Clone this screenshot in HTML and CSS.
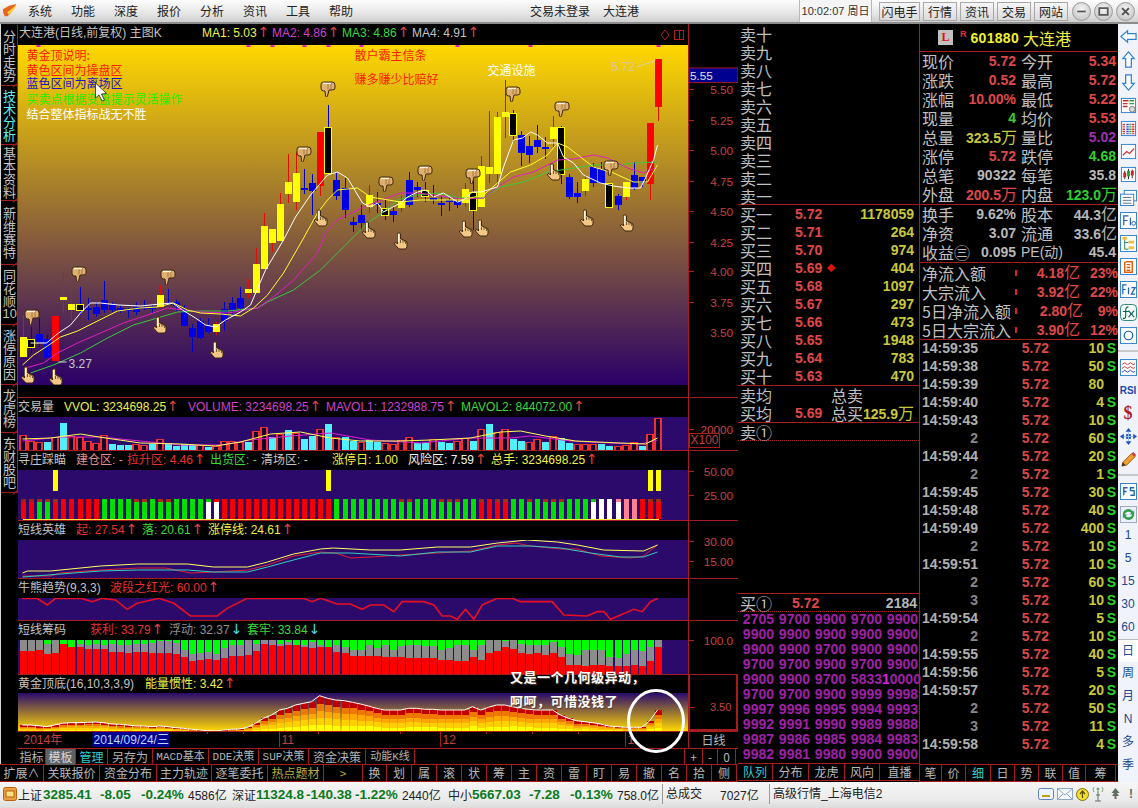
FILE: index.html
```html
<!DOCTYPE html>
<html lang="zh-CN">
<head>
<meta charset="utf-8">
<title>大连港 601880</title>
<link rel="stylesheet" href="styles.css">
</head>
<body>
<div class="app">
  <header class="topbar">
    <svg class="logo" viewBox="0 0 18 16"><path d="M1 6 L8 2 L16 0 Q13 8 6 14 L3 14 Q1 11 1 6Z" fill="#e8641c"/><path d="M6 9 Q10 7 16 1 Q14 8 7 12Z" fill="#ffd23c"/></svg>
    <nav class="menu"><span>系统</span><span>功能</span><span>深度</span><span>报价</span><span>分析</span><span>资讯</span><span>工具</span><span>帮助</span></nav>
    <div class="title"><span>交易未登录</span><span>大连港</span></div>
    <div class="clock">10:02:07 周日</div>
    <div class="btns"><span class="b-l">闪电手</span><span>行情</span><span>资讯</span><span>交易</span><span>网站</span></div>
    <div class="winbtns">
      <span><svg viewBox="0 0 20 20"><path d="M5 10h10" stroke="#555" stroke-width="2"/></svg></span>
      <span><svg viewBox="0 0 20 20"><rect x="5" y="6" width="10" height="8" fill="none" stroke="#555" stroke-width="2"/></svg></span>
      <span><svg viewBox="0 0 20 20"><path d="M6 6l8 8M14 6l-8 8" stroke="#555" stroke-width="2.4"/></svg></span>
    </div>
  </header>

  <div class="workspace">
    <div class="left">
      <div class="upper">
        <aside class="sidetabs">
          <div class="tab t1">分时走势</div>
          <div class="tab t2 on">技术分析</div>
          <div class="tab t3">基本资料</div>
          <div class="tab t4">新维赛特</div>
          <div class="tab t5">同花顺<span class="tcy">10</span></div>
          <div class="tab t6">涨停原因</div>
          <div class="tab t7">龙虎榜</div>
          <div class="tab t8">东财股吧</div>
        </aside>
        <section class="chart">
          <div class="pane p-main">
            <div class="pane-l">
              <div class="head h-main"><span class="wh">大连港(日线,前复权) 主图K</span><span class="ye">MA1: 5.03<i class="up">↑</i></span><span class="ma">MA2: 4.86<i class="up">↑</i></span><span class="gr">MA3: 4.86<i class="up">↑</i></span><span class="wh">MA4: 4.91<i class="up">↑</i></span><span class="glyphs"><svg viewBox="0 0 24 12" class="gl"><path d="M5 1l4 5-4 5-4-5z" fill="none" stroke="#b02020"/><rect x="14.500" y="1.500" width="9" height="9" fill="none" stroke="#b02020"/><path d="M19.500 2v8" stroke="#b02020"/></svg></span></div>
              <svg class="plot pm" id="mainplot" viewBox="18 45 669 340"></svg>
              <div class="gap12"></div>
            </div>
            <svg class="axis" id="ax0" viewBox="688 24 50 373"></svg>
          </div>
          <div class="pane p-vol">
            <div class="pane-l">
              <div class="head h-vol"><span class="wh">交易量</span><span class="ye">VVOL: 3234698.25<i class="up">↑</i></span><span class="ma">VOLUME: 3234698.25<i class="up">↑</i></span><span class="ma">MAVOL1: 1232988.75<i class="up">↑</i></span><span class="gr">MAVOL2: 844072.00<i class="up">↑</i></span></div>
              <svg class="plot" id="volplot" viewBox="18 417 669 33"></svg>
            </div>
            <div class="axwrap"><svg class="axis" id="ax1" viewBox="688 398 50 52"></svg><span class="x100">X100</span></div>
          </div>
          <div class="pane p-a">
            <div class="pane-l">
              <div class="head h-a"><span class="wh">寻庄踩瞄</span><span class="pk">建仓区: -</span><span class="re">拉升区: 4.46<i class="up">↑</i></span><span class="gr">出货区: -</span><span class="wh">清场区: -</span><span class="ye">涨停日: 1.00</span><span class="wt">风险区: 7.59<i class="up">↑</i></span><span class="ye">总手: 3234698.25<i class="up">↑</i></span></div>
              <svg class="plot" id="zhuangplot" viewBox="18 470 669 50"></svg>
            </div>
            <svg class="axis" id="ax2" viewBox="688 451 50 69"></svg>
          </div>
          <div class="pane p-b">
            <div class="pane-l">
              <div class="head h-b"><span class="wh">短线英雄</span><span class="re">起: 27.54<i class="up">↑</i></span><span class="gr">落: 20.61<i class="up">↑</i></span><span class="ye">涨停线: 24.61<i class="up">↑</i></span></div>
              <svg class="plot" id="heroplot" viewBox="18 540 669 38"></svg>
            </div>
            <svg class="axis" id="ax3" viewBox="688 521 50 57"></svg>
          </div>
          <div class="pane p-c">
            <div class="pane-l">
              <div class="head h-c"><span class="wh">牛熊趋势(9,3,3)</span><span class="re">波段之红光: 60.00<i class="up">↑</i></span></div>
              <svg class="plot" id="bullplot" viewBox="18 598 669 22"></svg>
            </div>
            <div class="axis-empty"></div>
          </div>
          <div class="pane p-d">
            <div class="pane-l">
              <div class="head h-d"><span class="wh">短线筹码</span><span class="re">获利: 33.79<i class="up">↑</i></span><span class="gy">浮动: 32.37<i class="dn">↓</i></span><span class="gr">套牢: 33.84<i class="dn">↓</i></span></div>
              <svg class="plot" id="chipplot" viewBox="18 640 669 34"></svg>
            </div>
            <svg class="axis" id="ax5" viewBox="688 621 50 53"></svg>
          </div>
          <div class="pane p-e">
            <div class="pane-l">
              <div class="head h-e"><span class="wh">黄金顶底(16,10,3,3,9)</span><span class="ye">能量惯性: 3.42<i class="up">↑</i></span></div>
              <svg class="plot gold" id="goldplot" viewBox="18 693 669 38"></svg>
            </div>
            <svg class="axis axis-box" id="ax6" viewBox="688 675 50 56"></svg>
          </div>
          <div class="daterow">
            <svg class="dates" id="dates" viewBox="18 732 669 15"></svg>
            <div class="period">日线</div>
          </div>
          <div class="tabrow">
            <span>指标</span><span class="act">模板</span><span class="cy">管理</span><span>另存为</span><span class="lat">MACD基本</span><span class="lat">DDE决策</span><span class="lat">SUP决策</span><span>资金决策</span><span class="lat">动能K线</span><span></span><span>+</span><span>-</span><span>0</span>
          </div>
          <div class="note n1">又是一个几何级异动，</div>
          <div class="note n2">呵呵，可惜没钱了</div>
          <svg class="ring" viewBox="0 0 60 66"><ellipse cx="30" cy="33" rx="27.500" ry="30.500" fill="none" stroke="#fff" stroke-width="3"/></svg>
        </section>
      </div>
      <div class="bottomtabs">
        <span>扩展∧</span><span>关联报价</span><span>资金分布</span><span>主力轨迹</span><span>逐笔委托</span><span class="ol">热点题材</span><span class="ol">&gt;</span><span>换</span><span>划</span><span>属</span><span>滚</span><span>状</span><span>筹</span><span>主</span><span>资</span><span>雷</span><span>盯</span><span>易</span><span>撤</span><span>名</span><span>拾</span><span>侧</span>
      </div>
    </div>

    <section class="book">
      <div class="sells">
        <div class="bk">卖十</div><div class="bk">卖九</div><div class="bk">卖八</div><div class="bk">卖七</div><div class="bk">卖六</div><div class="bk">卖五</div><div class="bk">卖四</div><div class="bk">卖三</div><div class="bk">卖二</div><div class="bk">卖一</div>
      </div>
      <div class="bids">
        <div class="bk"><span>买一</span><b class="cr">5.72</b><b class="cy2">1178059</b></div>
        <div class="bk"><span>买二</span><b class="cr">5.71</b><b class="cy2">264</b></div>
        <div class="bk"><span>买三</span><b class="cr">5.70</b><b class="cy2">974</b></div>
        <div class="bk"><span>买四</span><b class="cr">5.69<em>◆</em></b><b class="cy2">404</b></div>
        <div class="bk"><span>买五</span><b class="cr">5.68</b><b class="cy2">1097</b></div>
        <div class="bk"><span>买六</span><b class="cr">5.67</b><b class="cy2">297</b></div>
        <div class="bk"><span>买七</span><b class="cr">5.66</b><b class="cy2">473</b></div>
        <div class="bk"><span>买八</span><b class="cr">5.65</b><b class="cy2">1948</b></div>
        <div class="bk"><span>买九</span><b class="cr">5.64</b><b class="cy2">783</b></div>
        <div class="bk"><span>买十</span><b class="cr">5.63</b><b class="cy2">470</b></div>
      </div>
      <div class="avgs">
        <div class="bk avg"><span>卖均</span><b></b><span>总卖</span><b></b></div>
        <div class="bk avg"><span>买均</span><b class="cr">5.69</b><span>总买</span><b class="cy2">125.9<u>万</u></b></div>
      </div>
      <div class="queue-a"><div class="bk dot">卖①</div></div>
      <div class="queue-b">
        <div class="bk dot q"><span>买①</span><b class="cr">5.72</b><b class="gy2">2184</b></div>
        <div class="qgrid">
          <b>2705</b><b>9700</b><b>9900</b><b>9700</b><b>9900</b>
          <b>9900</b><b>9900</b><b>9900</b><b>9900</b><b>9900</b>
          <b>9900</b><b>9900</b><b>9700</b><b>9900</b><b>9900</b>
          <b>9700</b><b>9700</b><b>9900</b><b>9700</b><b>9900</b>
          <b>9900</b><b>9900</b><b>9700</b><b>5833</b><b class="wide"><span class="hl">1</span>0000</b>
          <b>9700</b><b>9700</b><b>9900</b><b>9999</b><b>9998</b>
          <b>9997</b><b>9996</b><b>9995</b><b>9994</b><b>9993</b>
          <b>9992</b><b>9991</b><b>9990</b><b>9989</b><b>9988</b>
          <b>9987</b><b>9986</b><b>9985</b><b>9984</b><b>9983</b>
          <b>9982</b><b>9981</b><b>9980</b><b>9900</b><b>9900</b>
        </div>
      </div>
      <div class="booktabs"><span class="cy">队列</span><span>分布</span><span>龙虎</span><span>风向</span><span>直播</span></div>
    </section>

    <section class="quote">
      <div class="qhead">
        <span class="lbadge">L</span><sup>R</sup><b>601880</b><span class="qname">大连港</span>
      </div>
      <div class="qblock">
        <div class="qrow"><span>现价</span><b class="cr">5.72</b><span>今开</span><b class="cr">5.34</b></div>
        <div class="qrow"><span>涨跌</span><b class="cr">0.52</b><span>最高</span><b class="cr">5.72</b></div>
        <div class="qrow"><span>涨幅</span><b class="cr">10.00%</b><span>最低</span><b class="cr">5.22</b></div>
        <div class="qrow"><span>现量</span><b class="cg">4</b><span>均价</span><b class="cr">5.53</b></div>
        <div class="qrow"><span>总量</span><b class="cy2">323.5<u>万</u></b><span>量比</span><b class="cp">5.02</b></div>
        <div class="qrow"><span>涨停</span><b class="cr">5.72</b><span>跌停</span><b class="cg">4.68</b></div>
        <div class="qrow"><span>总笔</span><b class="gy2">90322</b><span>每笔</span><b class="gy2">35.8</b></div>
        <div class="qrow"><span>外盘</span><b class="cr">200.5<u>万</u></b><span>内盘</span><b class="cg">123.0<u>万</u></b></div>
      </div>
      <div class="qblock b2">
        <div class="qrow"><span>换手</span><b class="gy2">9.62%</b><span>股本</span><b class="gy2">44.3<u>亿</u></b></div>
        <div class="qrow"><span>净资</span><b class="gy2">3.07</b><span>流通</span><b class="gy2">33.6<u>亿</u></b></div>
        <div class="qrow"><span>收益㊂</span><b class="gy2">0.095</b><span class="pelabel">PE(动)</span><b class="gy2">45.4</b></div>
      </div>
      <div class="qblock b3">
        <div class="frow"><span>净流入额</span><i></i><b class="cr">4.18<u>亿</u></b><b class="cr">23%</b></div>
        <div class="frow"><span>大宗流入</span><i></i><b class="cr">3.92<u>亿</u></b><b class="cr">22%</b></div>
        <div class="frow"><span>5日净流入额</span><i></i><b class="cr s">2.80<u>亿</u></b><b class="cr">9%</b></div>
        <div class="frow"><span>5日大宗流入</span><i></i><b class="cr">3.90<u>亿</u></b><b class="cr">12%</b></div>
      </div>
      <div class="trades">
        <div class="tr"><b class="t">14:59:35</b><b class="p">5.72</b><b class="v">10</b><b class="s">S</b></div>
        <div class="tr"><b class="t">14:59:38</b><b class="p">5.72</b><b class="v">50</b><b class="s">S</b></div>
        <div class="tr"><b class="t">14:59:39</b><b class="p">5.72</b><b class="v">80</b><b class="s"></b></div>
        <div class="tr"><b class="t">14:59:40</b><b class="p">5.72</b><b class="v">4</b><b class="s">S</b></div>
        <div class="tr"><b class="t">14:59:43</b><b class="p">5.72</b><b class="v">10</b><b class="s">S</b></div>
        <div class="tr"><b class="t r">2</b><b class="p">5.72</b><b class="v">60</b><b class="s">S</b></div>
        <div class="tr"><b class="t">14:59:44</b><b class="p">5.72</b><b class="v">20</b><b class="s">S</b></div>
        <div class="tr"><b class="t r">2</b><b class="p">5.72</b><b class="v">1</b><b class="s">S</b></div>
        <div class="tr"><b class="t">14:59:45</b><b class="p">5.72</b><b class="v">30</b><b class="s">S</b></div>
        <div class="tr"><b class="t">14:59:48</b><b class="p">5.72</b><b class="v">40</b><b class="s">S</b></div>
        <div class="tr"><b class="t">14:59:49</b><b class="p">5.72</b><b class="v">400</b><b class="s">S</b></div>
        <div class="tr"><b class="t r">2</b><b class="p">5.72</b><b class="v">10</b><b class="s">S</b></div>
        <div class="tr"><b class="t">14:59:51</b><b class="p">5.72</b><b class="v">10</b><b class="s">S</b></div>
        <div class="tr"><b class="t r">2</b><b class="p">5.72</b><b class="v">60</b><b class="s">S</b></div>
        <div class="tr"><b class="t r">3</b><b class="p">5.72</b><b class="v">10</b><b class="s">S</b></div>
        <div class="tr"><b class="t">14:59:54</b><b class="p">5.72</b><b class="v">5</b><b class="s">S</b></div>
        <div class="tr"><b class="t r">2</b><b class="p">5.72</b><b class="v">10</b><b class="s">S</b></div>
        <div class="tr"><b class="t">14:59:55</b><b class="p">5.72</b><b class="v">40</b><b class="s">S</b></div>
        <div class="tr"><b class="t">14:59:56</b><b class="p">5.72</b><b class="v">5</b><b class="s">S</b></div>
        <div class="tr"><b class="t">14:59:57</b><b class="p">5.72</b><b class="v">20</b><b class="s">S</b></div>
        <div class="tr"><b class="t r">2</b><b class="p">5.72</b><b class="v">50</b><b class="s">S</b></div>
        <div class="tr"><b class="t r">3</b><b class="p">5.72</b><b class="v">11</b><b class="s">S</b></div>
        <div class="tr"><b class="t">14:59:58</b><b class="p">5.72</b><b class="v">4</b><b class="s">S</b></div>
      </div>
      <div class="quotetabs"><span>笔</span><span>价</span><span class="cy">细</span><span>日</span><span>势</span><span>联</span><span>值</span><span>筹</span></div>
    </section>

    <aside class="rail">
      <div class="ico"><svg viewBox="0 0 18 18"><path d="M1 9l7-6v3h9v6H8v3z" fill="#fff" stroke="#2f80d0" stroke-width="1.300"/></svg></div>
      <div class="ico"><svg viewBox="0 0 18 18"><path d="M9 1l6 7h-3v9H6V8H3z" fill="#fff" stroke="#2f80d0" stroke-width="1.300"/></svg></div>
      <div class="ico"><svg viewBox="0 0 18 18"><path d="M9 17l6-7h-3V1H6v9H3z" fill="#fff" stroke="#2f80d0" stroke-width="1.300"/></svg></div>
      <div class="ico"><svg viewBox="0 0 18 18"><rect x="1.500" y="1.500" width="15" height="15" fill="#fff" stroke="#2f80d0"/><path d="M3 4h6M3 7h5M3 10h5" stroke="#c03030" stroke-width="1.500"/><path d="M10 4h5M10 7h5" stroke="#30a040" stroke-width="1.500"/><circle cx="13" cy="13" r="3" fill="#ddd" stroke="#777"/></svg></div>
      <div class="ico"><svg viewBox="0 0 18 18"><rect x="1.500" y="1.500" width="15" height="15" fill="#fff" stroke="#2f80d0"/><path d="M4 4v11" stroke="#c03030" stroke-width="2.500" stroke-dasharray="1.500 1"/><path d="M8 4v11" stroke="#3040c0" stroke-width="2.500" stroke-dasharray="1.500 1"/><path d="M11 4v11" stroke="#30a040" stroke-width="2.500" stroke-dasharray="1.500 1"/><path d="M14 4v11" stroke="#d03030" stroke-width="2.500" stroke-dasharray="1.500 1"/></svg></div>
      <div class="ico"><svg viewBox="0 0 18 18"><rect x="1.500" y="1.500" width="15" height="15" fill="#fff" stroke="#2f80d0"/><path d="M3 13l4-4 3 2 5-5" fill="none" stroke="#d03030" stroke-width="1.300"/></svg></div>
      <div class="ico"><svg viewBox="0 0 18 18"><rect x="1.500" y="1.500" width="15" height="15" fill="#fff" stroke="#2f80d0"/><path d="M5 5v9" stroke="#222"/><rect x="3.500" y="7" width="3" height="5" fill="#d02020"/><path d="M9 3v11" stroke="#222"/><rect x="7.500" y="5" width="3" height="6" fill="#20a040"/><path d="M13 4v9" stroke="#222"/><rect x="11.500" y="5" width="3" height="5" fill="#d02020"/></svg></div>
      <div class="ico"><svg viewBox="0 0 18 18"><rect x="4.500" y="1.500" width="13" height="11" fill="#fff" stroke="#2f80d0"/><rect x="0.500" y="5.500" width="14" height="12" fill="#fff" stroke="#2f80d0"/><path d="M3 9h9M3 12h9M3 15h9" stroke="#5a6a80"/></svg></div>
      <div class="ico"><svg viewBox="0 0 18 18"><rect x="0.500" y="0.500" width="17" height="17" fill="#fff" stroke="#2f80d0"/><path d="M4 14V4h5M4 9h4M11 6v8" fill="none" stroke="#2060b0" stroke-width="1.300"/><circle cx="14.500" cy="12" r="2" fill="none" stroke="#2060b0"/></svg></div>
      <div class="ico"><svg viewBox="0 0 18 18"><rect x="0.500" y="0.500" width="17" height="17" fill="#fff" stroke="#2f80d0"/><path d="M5 3v12h4M5 8h4" fill="none" stroke="#208060"/><rect x="2.500" y="2" width="5" height="3" fill="#f0c040"/><rect x="9" y="6" width="6" height="3" fill="#f0c040"/><rect x="9" y="12" width="6" height="3" fill="#f0c040"/></svg></div>
      <div class="ico"><svg viewBox="0 0 18 18"><rect x="0.500" y="0.500" width="17" height="17" fill="#fff" stroke="#2f80d0"/><path d="M6 4h7v11H5V4M7 7h4M7 10h4M7 13h4" fill="none" stroke="#e06010" stroke-width="1.500"/></svg></div>
      <div class="ico"><svg viewBox="0 0 18 18"><rect x="0.500" y="0.500" width="17" height="17" fill="#fff" stroke="#2f80d0"/><path d="M3 14V4h4M3 9h3M9 7v7M12 7h4l-4 7h4" fill="none" stroke="#2060b0" stroke-width="1.300"/></svg></div>
      <div class="ico"><svg viewBox="0 0 18 18"><rect x="0.500" y="0.500" width="17" height="17" rx="4" fill="#f4fff8" stroke="#208070"/><path d="M9 3Q6 3 6 7v6q0 3-3 2M3 8h6M9 7l6 7M15 7l-6 7" fill="none" stroke="#106060" stroke-width="1.200"/></svg></div>
      <div class="ico"><svg viewBox="0 0 18 18"><rect x="0.500" y="0.500" width="17" height="17" fill="#fff" stroke="#2f80d0"/><circle cx="9" cy="9" r="4.500" fill="none" stroke="#1860b0" stroke-width="1.300"/></svg></div>
      <hr class="rule">
      <div class="ico"><svg viewBox="0 0 18 18"><rect x="0.500" y="0.500" width="17" height="17" fill="#fff" stroke="#2f80d0"/><path d="M2 6l3-2 3 2 3-2 3 2 2-1" fill="none" stroke="#d03030"/><path d="M2 10l3-2 3 2 3-2 3 2 2-1" fill="none" stroke="#d03030"/><path d="M2 14l3-2 3 2 3-2 3 2 2-1" fill="none" stroke="#3040c0"/></svg></div>
      <div class="ico rsi">RSI</div>
      <div class="ico dollar">$</div>
      <div class="ico"><svg viewBox="0 0 18 18"><path d="M9 0l3 4H6zM9 18l-3-4h6zM0 9l4-3v6zM18 9l-4 3V6z" fill="#1850c0"/><rect x="6.500" y="6.500" width="5" height="5" fill="#1850c0"/><path d="M9 4v10M4 9h10" stroke="#9cc0f0"/></svg></div>
      <div class="ico"><svg viewBox="0 0 18 18"><path d="M3 12L12 3l4 3-9 9-5 1z" fill="#f0a030" stroke="#a06010"/><path d="M12 3l4 3 1-2-3-3z" fill="#d04040"/><path d="M2 16l1-4 3 3z" fill="#333"/></svg></div>
      <hr class="rule">
      <div class="ico"><svg viewBox="0 0 18 18"><rect x="0.500" y="0.500" width="17" height="17" fill="#fff" stroke="#2f80d0"/><path d="M8 5H4v8M4 9h3M15 5h-4v3h4v5h-4" fill="none" stroke="#1860b0" stroke-width="1.400"/></svg></div>
      <div class="ico"><svg viewBox="0 0 18 18"><rect x="0.500" y="0.500" width="17" height="17" fill="#eef" stroke="#9ab"/><path d="M3 9a6 6 0 0 1 11-3l1-2v5h-5l2-1.500A4 4 0 0 0 5 9zM15 9a6 6 0 0 1-11 3l-1 2V9h5L6 10.500A4 4 0 0 0 13 9z" fill="#30a050"/></svg></div>
      <div class="numbers">
        <span>1</span><span>5</span><span>15</span><span>30</span><span>60</span><span class="cur">日</span><span>周</span><span>月</span><span>N</span><span>多</span><span>季</span>
      </div>
    </aside>
  </div>

  <footer class="status">
    <svg class="sico" viewBox="0 0 14 14"><rect x="0.500" y="0.500" width="13" height="13" rx="2" fill="#e8a040" stroke="#b86010"/><rect x="3" y="4" width="8" height="6" fill="#ffe080" stroke="#b86010"/></svg>
    <span>上证</span><b class="sg">3285.41</b><b class="sg">-8.05</b><b class="sg">-0.24%</b><span>4586亿</span>
    <span>深证</span><b class="sg">11324.8</b><b class="sg">-140.38</b><b class="sg">-1.22%</b><span>2440亿</span>
    <span>中小</span><b class="sg">5667.03</b><b class="sg">-7.28</b><b class="sg">-0.13%</b><span>758.0亿</span>
    <span class="ln">总成交</span><span class="rt">7027亿</span><span class="ln">高级行情_上海电信2</span>
    <div class="sicons">
      <svg viewBox="0 0 16 12" width="16" height="12"><rect x="0.500" y="0.500" width="15" height="11" rx="2" fill="#eef4ff" stroke="#6080c0"/><path d="M4 8h8" stroke="#c0a020" stroke-width="2"/></svg>
      <svg viewBox="0 0 16 12" width="16" height="12"><rect x="0.500" y="0.500" width="15" height="11" fill="#f4f8ff" stroke="#90a8c8"/><path d="M1 1l7 6 7-6M1 11l5-5M15 11l-5-5" fill="none" stroke="#90a8c8"/></svg>
      <svg viewBox="0 0 13 13" width="13" height="13"><ellipse cx="6.500" cy="6.500" rx="6" ry="6" fill="#f0e030" stroke="#807010"/><path d="M6.500 3v7M4 6l2.500-3L9 6" fill="none" stroke="#605010" stroke-width="1.300"/></svg>
      <svg viewBox="0 0 12 16" width="12" height="16"><path d="M6 5v10M3 15h6M4 9h4" stroke="#607060" fill="none"/><circle cx="6" cy="3" r="1.500" fill="#80a080"/><path d="M2 1Q0 3 2 6M10 1q2 2 0 5" stroke="#80a080" fill="none"/></svg>
      <svg viewBox="0 0 9 12" width="9" height="12"><path d="M4.500 0l4 5H6l2 3H5.500v3h-2V8H1l2-3H.5z" fill="#607060"/></svg>
      <span class="bang">!</span>
    </div>
  </footer>
</div>
<script src="chart.js"></script>
</body>
</html>
```

FILE: styles.css
```css
* { box-sizing: border-box; }
html, body { margin: 0; padding: 0; }
body {
  width: 1138px; height: 808px; overflow: hidden;
  background: #eceff2;
  font: 12px "Liberation Sans", "Noto Sans CJK SC", sans-serif;
  color: #222;
}
.app { width: 1138px; height: 808px; display: flex; flex-direction: column; }

/* title bar */
.topbar {
  height: 24px; flex: none; display: flex; align-items: center;
  background: linear-gradient(#fdfdfd, #e6e6e6 60%, #cfcfcf);
  border-bottom: 2px solid #8c8c8c;
  font-family: "Noto Sans CJK SC", sans-serif;
}
.logo { width: 16px; height: 16px; margin: 0 10px 0 2px; flex: none; }
.menu { display: flex; width: 344px; flex: none; }
.menu span { width: 43px; line-height: 22px; }
.title { margin-left: 158px; width: 269px; flex: none; display: flex; gap: 13px; line-height: 22px; }
.clock {
  width: 73px; height: 22px; line-height: 22px; flex: none; text-align: center; white-space: nowrap;
  background: #f5f5f5; border-left: 1px solid #b8b8b8; border-right: 1px solid #b8b8b8;
  color: #333; font: 11px/22px "Liberation Sans", "Noto Sans CJK SC", sans-serif;
}
.btns { display: flex; gap: 3px; margin-left: 7px; flex: none; }
.btns span {
  width: 34px; height: 19px; line-height: 17px; text-align: center;
  border: 1px solid #a8a8a8; background: linear-gradient(#f6f6f6, #dadada);
}
.btns .b-l { width: 41px; }
.winbtns { display: flex; gap: 3px; margin-left: 4px; flex: none; }
.winbtns span {
  width: 19px; height: 19px; border-radius: 50%; border: 1px solid #9a9a9a;
  background: radial-gradient(circle at 50% 35%, #f4f4f4, #bdbdbd);
  display: block;
}
.winbtns svg { width: 17px; height: 17px; display: block; }

/* layout */
.workspace { height: 758px; flex: none; display: flex; background: #000; }
.left { width: 738px; flex: none; display: flex; flex-direction: column; }
.upper { height: 740px; flex: none; display: flex; }

/* vertical tabs */
.sidetabs { width: 18px; flex: none; background: #000; border-left: 1px solid #d8d8d8; padding-top: 1px; }
.tab {
  position: relative;
  writing-mode: vertical-rl; text-orientation: upright;
  font: 13px/16px "Noto Sans CJK SC", sans-serif;
  color: #c4c4c4; text-align: center;
  display: flex; align-items: center; justify-content: center;
  border-bottom: 1px solid #a81c1c; border-right: 1px solid #a81c1c;
  letter-spacing: -0.3px;
}
.tab::after {
  content: ""; position: absolute; right: -1px; bottom: -1px; width: 6px; height: 1px;
  background: #a81c1c; transform: rotate(-40deg);
}
.tab.on { color: #5cf0f0; }
.tcy { text-combine-upright: all; font-family: "Liberation Sans", sans-serif; }
.t1 { height: 61px; } .t2 { height: 59px; } .t3 { height: 56px; } .t4 { height: 64px; }
.t5 { height: 60px; } .t6 { height: 60px; } .t7 { height: 48px; } .t8 { height: 60px; }

/* chart panes */
.chart { width: 720px; flex: none; position: relative; display: flex; flex-direction: column; background: #000; }
.pane { display: flex; border-top: 1px solid #a81c1c; flex: none; }
.pane-l { width: 670px; flex: none; display: flex; flex-direction: column; min-height: 0; }
.p-main { height: 373px; border-top: none; }
.p-vol { height: 53px; }
.p-a { height: 70px; }
.p-b { height: 58px; }
.p-c { height: 42px; }
.p-d { height: 54px; }
.p-e { height: 57px; }
.head {
  flex: none; height: 19px; line-height: 19px; display: grid; white-space: nowrap;
  font-size: 12px; color: #c0c0c0;
}
.head span { overflow: visible; }
.head i { font: normal 14px/12px "DejaVu Sans", sans-serif; color: #e04040; margin-left: 1px; }
.head i.dn { color: #40e0f0; }
.h-main { height: 21px; line-height: 19px; grid-template-columns: 183px 70px 70px 70px 1fr 28px; padding-left: 1px; }
.h-vol { grid-template-columns: 46px 124px 138px 135px 1fr; }
.h-a { grid-template-columns: 58px 51px 83px 51px 71px 76px 83px 1fr; }
.h-b { height: 19px; grid-template-columns: 58px 66px 66px 1fr; }
.h-c { grid-template-columns: 92px 1fr; }
.h-d { grid-template-columns: 72px 79px 78px 1fr; }
.h-e { height: 18px; grid-template-columns: 127px 1fr; }
.glyphs { display: flex; align-items: center; }
.gl { width: 24px; height: 12px; }
.wh { color: #c4c4c4; } .wt { color: #f0f0f0; } .ye { color: #f0f04c; } .ma { color: #d040d0; }
.gr { color: #3cd83c; } .re { color: #e83030; } .pk { color: #e09090; } .gy { color: #909090; }
.plot { display: block; flex: 1 1 auto; width: 670px; min-height: 0; background: #2c0a6c; }
.pm { flex: none; height: 340px; background: linear-gradient(#ffd800, #2a0068); }
.gold { background: linear-gradient(#2a0a6c, #ffd800); }
.gap12 { height: 12px; flex: none; }
.axis, .axis-empty { width: 50px; flex: none; display: block; border-left: 1px solid #a81c1c; }
.axis-box { border: 2px solid #a81c1c; border-top: none; width: 50px; }
.axwrap { position: relative; width: 50px; flex: none; }
.axwrap .axis { width: 50px; height: 100%; }
.x100 {
  position: absolute; left: 1px; top: 35px; width: 31px; height: 15px; line-height: 13px;
  border: 1px solid #a81c1c; background: #000; color: #c04040; text-align: center;
}
.axis text { font: 12px "Liberation Sans", sans-serif; fill: #c84040; text-anchor: end; }
.axis .cur { fill: #e0e0e0; text-anchor: start; }
.daterow { height: 17px; flex: none; display: flex; border-top: 1px solid #a81c1c; }
.dates { width: 670px; height: 15px; display: block; }
.dates text { font: 12px "Liberation Sans", "Noto Sans CJK SC", sans-serif; fill: #c84040; }
.dates .sel { fill: #b8d8ff; }
.period { width: 50px; border-left: 1px solid #a81c1c; color: #b8b8b8; text-align: center; line-height: 15px; font-family: "Noto Sans CJK SC", sans-serif; }
.tabrow {
  height: 17px; flex: none; display: grid;
  grid-template-columns: 28px 30px 32px 45px 56px 50px 50px 57px 49px 270px 18px 15px 18px;
  border-top: 1px solid #a81c1c; color: #b4b4b4; font-family: "Noto Sans CJK SC", sans-serif;
}
.tabrow span { text-align: center; line-height: 16px; border-right: 1px solid #a81c1c; white-space: nowrap; }
.tabrow .act { background: #606060; color: #d8d8d8; }
.tabrow .lat { font-family: "Liberation Mono", "Noto Sans CJK SC", sans-serif; font-size: 11px; }
.cy { color: #30d0d0; }
.note {
  position: absolute; font: bold 13px/16px "Noto Sans CJK SC", sans-serif; color: #fff;
  text-shadow: 1px 1px 1px #5a4030; white-space: nowrap;
}
.n1 { left: 492px; top: 645px; letter-spacing: .5px; }
.n2 { left: 492px; top: 669px; letter-spacing: .5px; }
.ring { position: absolute; left: 608px; top: 664px; width: 60px; height: 66px; }

.bottomtabs {
  height: 18px; flex: none; display: grid;
  grid-template-columns: 44px 56px 57px 55px 56px 56px 39px 24px repeat(14, 25px);
  border-top: 1px solid #a81c1c; border-bottom: 1px solid #a81c1c;
  color: #b8b8b8; font-family: "Noto Sans CJK SC", sans-serif;
}
.bottomtabs span { text-align: center; line-height: 16px; border-right: 1px solid #a81c1c; }
.bottomtabs .ol { color: #b8a840; }

/* order book */
.book { width: 182px; flex: none; display: flex; flex-direction: column; border-right: 1px solid #a81c1c; padding-top: 1px; }
.bk {
  height: 18px; line-height: 18px; display: grid; grid-template-columns: 55px 46px 1fr;
  padding: 0 5px 0 2px; color: #c0c0c0; font-size: 16px; font-family: "Noto Sans CJK SC", sans-serif; white-space: nowrap;
}
.bk b, .qrow b, .frow b, .tr b, .qgrid b { font: bold 14px "Liberation Sans", sans-serif; }
.bk b { line-height: 18px; }
.bk b:last-child { text-align: right; }
.bk u { text-decoration: none; font: 16px/16px "Noto Sans CJK SC", sans-serif; }
.bk em { color: #e01010; font-size: 8px; font-style: normal; margin-left: 5px; vertical-align: 2px; }
.cr { color: #e04848; } .cy2 { color: #c8c83c; } .cg { color: #30d030; } .cp { color: #a030b0; } .gy2 { color: #b8b8b8; }
.sells { height: 180px; flex: none; border-bottom: 1px solid #a81c1c; }
.bids { height: 181px; flex: none; border-bottom: 1px solid #a81c1c; }
.avgs { height: 37px; flex: none; border-bottom: 1px solid #a81c1c; }
.avg { grid-template-columns: 55px 36px 32px 1fr; }
.queue-a { height: 171px; flex: none; border-bottom: 1px solid #a81c1c; }
.dot { border-bottom: 1px dotted #a81c1c; height: 18px; }
.q { grid-template-columns: 52px 1fr auto; padding-right: 2px; }
.queue-b { height: 169px; flex: none; }
.qgrid { display: grid; grid-template-columns: repeat(5, 36px); grid-auto-rows: 15px; }
.qgrid b { color: #a020a8; text-align: right; line-height: 15px; white-space: nowrap; }
.qgrid b.wide { direction: rtl; unicode-bidi: plaintext; }
.hl { color: #e020e0; }
.booktabs { height: 18px; flex: none; display: grid; grid-template-columns: 35px 36px 36px 35px 39px; border-top: 1px solid #a81c1c; border-bottom: 1px solid #a81c1c; color: #b8b8b8; font-family: "Noto Sans CJK SC", sans-serif; }
.booktabs span { text-align: center; line-height: 16px; border-right: 1px solid #a81c1c; }
.booktabs span:last-child { border-right: none; }

/* quote */
.quote { width: 198px; flex: none; display: flex; flex-direction: column; }
.qhead { height: 28px; flex: none; border-bottom: 1px solid #a81c1c; display: flex; align-items: center; padding-left: 18px; color: #f0f040; }
.lbadge { width: 15px; height: 15px; background: #c0c0c0; color: #e01010; font: bold 12px/15px "Liberation Serif", serif; text-align: center; }
.qhead sup { color: #e03030; font: bold 9px "Liberation Sans", sans-serif; margin: -8px 4px 0 7px; }
.qhead b { font: bold 14px "Liberation Sans", sans-serif; color: #f0f030; letter-spacing: .3px; }
.qname { font: 16px/20px "Noto Sans CJK SC", sans-serif; margin-left: 4px; }
.qblock { height: 153px; flex: none; border-bottom: 1px solid #a81c1c; padding-left: 2px; }
.qblock.b2 { height: 58px; }
.qblock.b3 { height: 77px; }
.qrow {
  height: 19px; line-height: 19px; display: grid; grid-template-columns: 32px 62px 5px 32px 63px;
  font: 16px/19px "Noto Sans CJK SC", sans-serif; color: #c0c0c0; white-space: nowrap;
}
.qrow > span:nth-of-type(2) { grid-column: 4; }
.qrow b { line-height: 19px; text-align: right; }
.qrow u, .frow u { text-decoration: none; font: 16px/16px "Noto Sans CJK SC", sans-serif; }
.qrow b u { margin-right: -1px; }
.pelabel { font-size: 14px; font-family: "Liberation Sans", "Noto Sans CJK SC", sans-serif; }
.frow {
  height: 19px; display: grid; grid-template-columns: 92px 4px 62px 38px;
  font: 16px/19px "Noto Sans CJK SC", sans-serif; color: #c0c0c0; white-space: nowrap;
  align-items: center;
}
.frow i { width: 2px; height: 6px; background: #e02020; display: block; margin-left: 1px; }
.frow b { text-align: right; line-height: 19px; }
.frow b.s { transform: translateX(3px); }
.trades { flex: 1 1 auto; padding-left: 2px; margin-top: -1px; }
.tr { height: 18px; display: grid; grid-template-columns: 56px 71px 55px 12px; align-items: center; }
.tr b { line-height: 18px; }
.tr .t { color: #b0b0b0; }
.tr .t.r { text-align: right; color: #888; }
.tr .p { color: #d84848; text-align: right; }
.tr .v { color: #c8c83c; text-align: right; }
.tr .s { color: #30d030; text-align: right; }
.quotetabs { height: 18px; flex: none; display: grid; grid-template-columns: 22px 24px 25px 24px 24px 24px 23px 30px; border-top: 1px solid #a81c1c; border-bottom: 1px solid #a81c1c; color: #b8b8b8; font-family: "Noto Sans CJK SC", sans-serif; }
.quotetabs span { text-align: center; line-height: 16px; border-right: 1px solid #a81c1c; }

/* right rail */
.rail { width: 20px; flex: none; background: #f0f4fa; padding-top: 1px; display: flex; flex-direction: column; align-items: center; }
.ico { width: 20px; height: 23px; flex: none; display: flex; align-items: center; justify-content: center; }
.ico svg { width: 17px; height: 17px; display: block; }
.rule { width: 20px; height: 2px; margin: 3px 0 4px; border: none; background: #c8c8c8; flex: none; }
.rsi { font: bold 10px "Liberation Sans", sans-serif; color: #2048a8; }
.dollar { font: bold 18px "Liberation Serif", serif; color: #b02020; }
.numbers { display: flex; flex-direction: column; margin-top: -2px; width: 20px; font-size: 12px; color: #204890; }
.numbers span { height: 23px; line-height: 23px; text-align: center; font-family: "Liberation Sans", "Noto Sans CJK SC", sans-serif; }
.numbers .cur { background: #fff; border-top: 1px solid #bbb; }

/* status */
.status {
  height: 26px; flex: none; display: grid; align-items: center; white-space: nowrap;
  grid-template-columns: 18px 25px 57px 41px 47px 44px 24px 50px 49px 47px 46px 24px 57px 41px 47px 45px 50px 57px 269px 1fr;
  background: linear-gradient(#f6f6f6, #eaeaea 70%, #dcdcdc);
  font-family: "Liberation Sans", "Noto Sans CJK SC", sans-serif; color: #222; padding-bottom: 2px;
}
.sico { width: 14px; height: 14px; margin-left: 3px; }
.sg { color: #0a7a1e; font: bold 13.500px "Liberation Sans", sans-serif; }
.ln { border-left: 1px solid #999; padding-left: 3px; height: 20px; line-height: 20px; }
.rt { padding-left: 8px; }
.sicons { display: flex; align-items: center; gap: 3px; }
.sicons svg:nth-child(5) { margin-left: 4px; }
.bang { font: bold 12px "Liberation Sans", sans-serif; color: #607060; margin-left: 6px; }
```

FILE: chart.js
```javascript
(function () {
  var X = function (i) { return Math.round(22.3 + 8.03 * i); };
  function el(id) { return document.getElementById(id); }
  function poly(pts, color, w) {
    return '<polyline fill="none" stroke="' + color + '" stroke-width="' + (w || 1) + '" points="' +
      pts.map(function (p) { return p.join(','); }).join(' ') + '"/>';
  }
  function rect(x, y, w, h, f, extra) {
    return '<rect x="' + x + '" y="' + y + '" width="' + w + '" height="' + Math.max(h, 0) + '" fill="' + f + '" ' + (extra || '') + '/>';
  }
  function txt(x, y, s, color, size, extra) {
    return '<text x="' + x + '" y="' + y + '" fill="' + color + '" font-size="' + (size || 12) + '" font-family="Noto Sans CJK SC, sans-serif" ' + (extra || '') + '>' + s + '</text>';
  }

  var candles = [
    [337,357,315,357,'y'],[339,347,327,353,'h'],[334,342,318,347,'b'],[339,358,335,358,'b'],[316,361,316,361,'r'],
    [297,300,272,313,'y'],[304,310,287,320,'y'],[304,310,287,315,'h'],[308,309,298,320,'b'],[307,314,302,317,'b'],
    [300,310,281,313,'b'],[305,310,302,312,'b'],[308,311,305,313,'b'],[309,311,308,318,'b'],[307,312,302,315,'b'],
    [307,308,300,310,'b'],[307,308,304,313,'b'],[295,307,285,308,'y'],[303,304,289,304,'b'],[302,306,300,311,'b'],
    [309,326,305,326,'b'],[328,337,324,352,'b'],[321,338,318,339,'b'],[325,332,318,333,'b'],[324,332,322,335,'y'],
    [309,321,302,331,'b'],[303,310,297,317,'b'],[298,308,287,311,'b'],[289,293,279,298,'y'],[264,293,248,293,'y'],
    [226,269,213,269,'y'],[229,243,229,252,'y'],[204,241,193,241,'y'],[182,194,154,203,'y'],[173,202,152,210,'y'],
    [188,189,169,194,'b'],[183,191,174,215,'b'],[132,186,132,196,'r'],[127,173,105,174,'h'],[180,196,172,200,'b'],
    [188,210,178,218,'b'],[222,225,217,232,'b'],[215,223,205,230,'b'],[195,207,185,213,'y'],[203,204,192,213,'b'],
    [208,215,198,220,'h'],[211,215,207,222,'b'],[201,208,196,212,'y'],[180,205,172,207,'b'],[187,190,182,197,'b'],
    [190,196,182,202,'h'],[198,200,185,204,'b'],[203,204,196,216,'b'],[200,201,197,211,'b'],[201,205,197,208,'b'],
    [189,203,183,207,'y'],[192,210,177,230,'h'],[166,207,156,207,'y'],[167,174,111,183,'y'],[117,174,112,185,'y'],
    [112,117,80,138,'y'],[113,135,110,142,'h'],[135,153,131,166,'b'],[146,155,136,163,'b'],[140,147,125,153,'b'],
    [147,148,137,159,'b'],[127,139,116,147,'y'],[127,174,126,184,'h'],[177,197,174,199,'b'],[193,197,182,203,'b'],
    [179,191,175,196,'y'],[167,183,163,187,'b'],[169,183,162,184,'b'],[183,207,183,208,'h'],[196,205,194,210,'b'],
    [182,197,182,200,'y'],[175,188,162,190,'b'],[177,183,177,187,'b'],[123,184,123,200,'r'],[59,107,59,121,'r']
  ];
  var white = [[30,343],[46,343],[58,333],[70,325],[80,313],[90,303],[100,303],[118,305],[140,306],[160,304],[172,303],[182,310],[195,318],[205,325],[215,327],[225,320],[240,312],[250,305],[265,270],[283,240],[295,217],[310,195],[327,175],[337,172],[347,178],[353,188],[362,203],[370,207],[377,203],[383,212],[400,203],[407,197],[417,192],[425,190],[433,197],[443,193],[457,202],[463,200],[472,192],[480,192],[487,190],[497,187],[503,167],[513,140],[522,138],[530,132],[537,135],[547,143],[557,143],[563,157],[573,163],[583,175],[600,183],[613,186],[627,188],[640,188],[645,178],[653,160],[657,145]];
  var yellow = [[22,365],[33,355],[47,346],[60,337],[77,331],[93,323],[117,311],[140,308],[157,307],[173,303],[187,310],[200,313],[220,314],[240,316],[253,308],[267,295],[283,273],[302,240],[317,213],[327,200],[337,190],[357,188],[370,197],[400,202],[420,200],[433,200],[460,200],[483,195],[497,183],[510,172],[530,165],[547,155],[557,143],[567,147],[580,157],[593,167],[613,173],[633,182],[647,182],[657,165]];
  var magenta = [[25,368],[43,363],[57,353],[77,343],[100,333],[123,323],[147,315],[167,308],[183,310],[200,312],[227,313],[257,308],[273,297],[293,280],[317,253],[325,233],[337,220],[363,207],[400,193],[417,193],[433,195],[460,199],[483,198],[497,187],[513,177],[533,172],[557,160],[573,159],[593,155],[607,158],[627,168],[643,173],[657,167]];
  var green = [[30,373],[53,365],[80,353],[107,338],[133,325],[157,318],[177,312],[200,311],[227,311],[257,308],[267,302],[293,290],[320,270],[350,240],[367,223],[383,212],[397,200],[417,195],[437,193],[460,198],[483,198],[500,187],[523,182],[547,172],[567,169],[593,165],[617,165],[633,163],[657,162]];

  var handUp = 'M4.500 1.500 Q6 0 7.500 1.500 V7 H9 V8 H11 V9 H13 V10 H14 V15 L12.500 17 H6 L1.500 12 V11 L3 10.500 L4.500 12 Z';
  var handDn = 'M1 3.500 Q1 1 3.500 1 H12 Q15 1 15 4 V7 Q15 9 12 9 H9 L7.500 15 Q6.500 17 5.500 15 L5 10 H3.500 Q1 10 1 7 Z';
  function hand(cx, cy, up) {
    var x = cx - 7.5, y = cy - 9;
    return '<g transform="translate(' + x + ' ' + y + ')"><path d="' + (up ? handUp : handDn) + '" fill="' + (up ? '#f4c884' : '#e0b070') + '" stroke="#3c2810" stroke-width="1"/>' +
      (up ? '<path d="M7.500 8v3M10 9v2M12.500 10v2" stroke="#3c2810" stroke-width=".7"/><path d="M5.500 2v8" stroke="#fff4d8" stroke-width="1.500"/>'
          : '<path d="M11 1.500v7M8 1.500v7" stroke="#8a5c28" stroke-width=".7"/><path d="M3 2.500h8" stroke="#fff4d8" stroke-width="1.300"/>') + '</g>';
  }

  var s = '<g shape-rendering="crispEdges">';
  candles.forEach(function (c, i) {
    var x = X(i), col = { y: '#ffff00', h: '#ffff00', b: '#0000e6', r: '#ff0000' }[c[4]];
    var wick = (c[4] === 'h' || c[4] === 'b') ? '#0000c8' : '#e01000';
    s += rect(x, c[2], 1, c[3] - c[2], wick);
    if (c[4] === 'h') s += rect(x - 3, c[0], 7, c[1] - c[0], '#000', 'stroke="#ffff00" stroke-width="1"');
    else s += rect(x - 3, c[0], 7, Math.max(c[1] - c[0], 2), col);
  });
  s += '</g>';
  s += poly(green, '#3cc83c') + poly(magenta, '#e020c0') + poly(yellow, '#ffff30') + poly(white, '#ffffff');
  [38, 248, 272, 304, 328, 361, 457, 530, 658].forEach(function (x) {
    s += rect(x - 2, 45, 4, 2, '#e020c0');
  });
  [[31,318],[78,275],[167,278],[303,155],[327,90],[385,185],[424,174],[472,177],[512,95],[561,110],[610,169]].forEach(function (p) { s += hand(p[0], p[1], false); });
  [[27,375],[55,377],[159,325],[216,350],[320,218],[368,230],[465,229],[481,228],[586,218],[626,223],[553,172],[400,241]].forEach(function (p) { s += hand(p[0], p[1], true); });
  s += txt(26, 60, '黄金顶说明:', '#ff2000') + txt(26, 75, '黄色区间为操盘区', '#ff2000') + txt(26, 88, '蓝色区间为离场区', '#2010c8') +
       txt(26, 104, '买卖点根据变盘提示灵活操作', '#20f000') + txt(26, 119, '结合整体指标战无不胜', '#ffffff') +
       txt(354, 60, '散户霸主信条', '#ff2000') + txt(354, 84, '赚多赚少比赔好', '#ff2000') + txt(487, 75, '交通设施', '#ffffff');
  s += '<text x="611" y="71" fill="#d8c8a0" font-size="12" font-family="Liberation Sans">5.72</text><path d="M636 67 Q646 64 655 60" stroke="#d8d0b0" fill="none"/>';
  s += '<path d="M58 362 H66" stroke="#d8d8d8"/><text x="68" y="368" fill="#c8c8d0" font-size="12" font-family="Liberation Sans">3.27</text>';
  s += '<path d="M95 83 V98 L98.500 95 L101.500 101 L104 100 L101 94 L106 93.500 Z" fill="#fff" stroke="#222" stroke-width=".8"/>';
  el('mainplot').innerHTML = s;

  // volume
  var vol = [[585,1],[602,1],[607,1],[605,0],[590,1],[548,0],[587,1],[592,1],[602,1],[610,1],[585,1],[612,0],[615,0],[615,0],[612,1],[615,1],[612,0],[596,1],[610,0],[617,0],[612,0],[615,0],[615,1],[620,0],[618,1],[602,1],[602,1],[605,1],[605,0],[572,1],[560,1],[590,0],[582,1],[570,0],[580,1],[597,0],[587,0],[568,1],[552,0],[592,1],[590,0],[603,0],[605,1],[600,0],[605,0],[610,1],[612,1],[600,1],[590,1],[608,0],[608,0],[598,1],[605,0],[608,0],[602,1],[593,1],[603,0],[568,1],[552,0],[575,1],[567,1],[597,0],[602,0],[605,1],[597,1],[605,0],[587,1],[593,0],[610,0],[612,1],[612,1],[612,1],[613,0],[617,0],[617,1],[615,1],[607,1],[617,0],[583,1],[533,1]];
  s = '<g shape-rendering="crispEdges">';
  vol.forEach(function (v, i) {
    var y = Math.round(240 + v[0] / 3), x = X(i) - 3;
    if (v[1]) s += rect(x + .5, y + .5, 6, 450 - y, '#100030', 'stroke="#f03030" stroke-width="1.600"');
    else s += rect(x, y, 7, 450 - y, '#50f0ff');
  });
  s += '</g>';
  s += poly([[22,441],[60,437],[100,437],[140,441],[180,445],[220,445],[250,440],[290,436],[330,433],[370,440],[420,443],[470,438],[510,438],[530,436],[570,441],[610,443],[640,444],[657,440]], '#e020d0');
  s += poly([[22,439],[50,438],[80,434],[105,438],[140,443],[180,444],[215,446],[240,442],[270,434],[300,432],[330,438],[360,441],[400,441],[430,440],[470,438],[500,432],[520,431],[545,436],[575,441],[620,443],[645,444],[657,438]], '#ffff50');
  el('volplot').innerHTML = s;

  // colour bars
  var cols = [];
  for (var i = 0; i < 80; i++) {
    var c = '#00e000';
    if (i < 2 || (i >= 4 && i <= 9) || (i >= 25 && i <= 38) || (i >= 57 && i <= 60) || i >= 77) c = '#f00000';
    if (i === 23 || i === 24 || (i >= 71 && i <= 74)) c = '#ffffff';
    if (i === 75 || i === 76) c = '#ff8090';
    cols.push(c);
  }
  var caps = { 0:'#a02010',1:'#a02010',2:'#a03010',3:'#a03010',4:'#a03010',14:'#a03010',15:'#a03010',17:'#a03010',18:'#a03010',23:'#00d000',24:'#f00000',47:'#a03010',48:'#a03010',52:'#a03010',53:'#a03010',54:'#a03010',57:'#a03010',59:'#a03010',60:'#a03010',63:'#a03010',65:'#a03010',66:'#a03010',67:'#a03010',71:'#20c020',74:'#ff8090',78:'#a03010',79:'#a03010' };
  s = '<g shape-rendering="crispEdges">';
  [4, 38, 78, 79].forEach(function (i) { s += rect(X(i) - 2, 470, 5, 21, '#ffff00'); });
  cols.forEach(function (col, i) {
    s += rect(X(i) - 2, 499, 5, 20, col);
    if (caps[i]) s += rect(X(i) - 2, 499, 5, 3, caps[i]);
  });
  s += rect(22, 519, 636, 1, '#ffe840') + '</g>';
  el('zhuangplot').innerHTML = s;

  // hero lines
  s = poly([[22,576],[50,576],[60,573],[100,570],[137,568],[165,568],[190,573],[213,572],[247,570],[267,565],[293,556],[320,552],[335,553],[350,558],[370,557],[400,555],[437,553],[470,551],[497,545],[515,543],[530,546],[560,549],[577,549],[600,556],[630,558],[643,556],[657,545]], '#e02030');
  s += poly([[22,577],[60,574],[100,571],[137,570],[187,570],[213,572],[247,572],[267,567],[293,560],[320,553],[350,553],[400,556],[437,552],[470,552],[497,546],[530,546],[560,548],[590,553],[620,557],[643,557],[657,552]], '#30d0c0');
  s += poly([[22,573],[27,571],[50,571],[100,566],[137,564],[187,564],[213,567],[247,567],[267,562],[293,554],[320,549],[333,548],[370,550],[400,550],[437,547],[470,547],[497,543],[527,540],[557,542],[577,545],[603,550],[643,551],[657,545]], '#ffff60');
  el('heroplot').innerHTML = s;

  // bull/bear line
  var z6 = [[65,205],[110,205],[140,225],[165,205],[240,205],[275,215],[305,205],[345,210],[380,238],[410,220],[475,205],[520,220],[570,258],[650,258],[680,235],[740,205],[910,205],[935,215],[960,205],[1010,222],[1050,222],[1085,238],[1110,225]];
  var z7 = [[0,225],[40,225],[70,245],[95,215],[160,215],[190,225],[215,258],[240,258],[260,268],[285,238],[310,268],[335,225],[380,205],[425,205],[450,215],[545,215],[580,255],[650,258],[680,245],[700,245],[720,268],[790,238],[815,245],[840,215],[862,205]];
  var bull = z6.map(function (p) { return [p[0] / 3, 530 + p[1] / 3]; }).concat(z7.map(function (p) { return [370 + p[0] / 3, 530 + p[1] / 3]; }));
  el('bullplot').innerHTML = poly(bull, '#e81020', 1.6);

  // chips
  var redTop = [363,363,360,372,370,342,350,352,358,358,358,365,365,368,365,365,368,368,370,372,380,392,390,388,390,385,378,378,375,362,342,345,348,345,345,352,353,352,350,365,370,378,378,378,378,380,380,382,383,383,385,385,390,390,392,392,380,390,370,363,350,358,368,372,368,375,368,380,405,405,408,405,405,408,408,408,405,408,392,350];
  var grayTop = [330,330,330,342,330,342,350,342,345,342,345,342,345,345,342,342,340,332,332,340,360,372,368,365,372,355,345,345,330,342,330,330,342,335,345,345,335,345,352,345,352,360,360,345,355,345,360,348,345,345,348,348,360,355,345,345,360,345,330,330,332,330,342,345,345,345,335,352,372,375,360,360,360,380,385,372,360,362,352,330];
  s = '<g shape-rendering="crispEdges">';
  redTop.forEach(function (r, i) {
    var x = X(i) - 3, gy = Math.round(530 + grayTop[i] / 3), ry = Math.round(530 + r / 3);
    s += rect(x, 640, 7, gy - 640, '#00ff00');
    s += rect(x, gy, 7, ry - gy, '#8c8c8c');
    s += rect(x, ry, 7, 674 - ry, '#ff0000');
  });
  el('chipplot').innerHTML = s + '</g>';

  // gold
  var tops = [585,585,587,590,585,580,578,578,577,576,578,582,583,585,588,588,590,588,590,593,595,598,600,602,603,600,598,597,592,580,565,555,540,535,525,520,515,497,505,510,512,517,522,528,535,540,540,540,535,535,538,538,540,540,540,540,530,540,532,525,525,530,535,538,540,540,540,555,565,572,575,578,582,588,590,592,592,592,573,540];
  var bands = ['#ffff00', '#ffd000', '#ffa800', '#f07800', '#c00000'];
  s = '<g shape-rendering="crispEdges">';
  var line = [];
  tops.forEach(function (z, i) {
    var top = 530 + z / 3, h = 731 - top, x = X(i) - 3;
    var y = 731;
    bands.forEach(function (b) {
      var bh = h / 5;
      y -= bh;
      s += rect(x, y.toFixed(1), 7, Math.ceil(bh), b);
    });
    line.push([X(i), top.toFixed(1)]);
  });
  s += '</g>' + poly(line, '#ffffff');
  el('goldplot').innerHTML = s;

  // axes
  function axis(id, items, box) {
    var o = '<g shape-rendering="crispEdges">';
    items.forEach(function (it) { o += rect(688, it[0], 5, 1, '#b02020'); });
    o += '</g>';
    items.forEach(function (it) { o += '<text x="733" y="' + (it[0] + 5) + '">' + it[1] + '</text>'; });
    if (box) o += box;
    el(id).innerHTML = o;
  }
  axis('ax0', [[87,'5.50'],[118,'5.25'],[149,'5.00'],[180,'4.75'],[211,'4.50'],[243,'4.25'],[272,'4.00'],[304,'3.75'],[335,'3.50']],
    '<rect x="688" y="65" width="50" height="15" fill="#000090" stroke="#a81c1c"/><text class="cur" x="689" y="77">5.55</text>');
  axis('ax1', [[429,'20000']]);
  axis('ax2', [[471,'50.00'],[495,'25.00']]);
  axis('ax3', [[541,'30.00'],[561,'15.00']]);
  axis('ax5', [[640,'100.0']]);
  axis('ax6', [[708,'3.50']]);

  // dates
  el('dates').innerHTML =
    '<text x="23" y="744">2014年</text>' +
    '<rect x="92" y="732" width="77" height="15" fill="#000090"/><text class="sel" x="93" y="744">2014/09/24/三</text>' +
    '<path d="M279 732v15M440 732v15M625 732v15" stroke="#a81c1c"/>' +
    '<path d="M207 732v2M243 732v2M318 732v2M400 732v2M486 732v2M532 732v2M578 732v2" stroke="#a81c1c"/>' +
    '<text x="281" y="744">11</text><text x="442" y="744">12</text><text x="627" y="744">1</text>';
})();
```
